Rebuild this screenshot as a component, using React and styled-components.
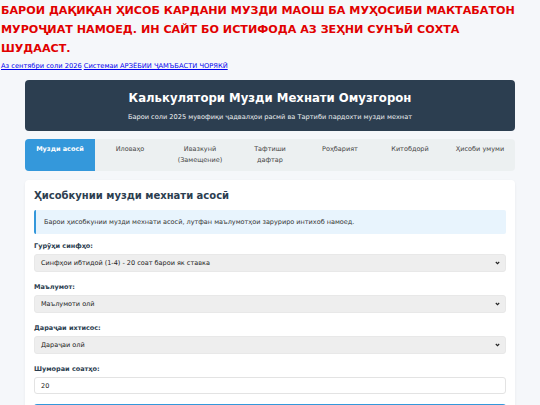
import React from 'react';
import styled, { createGlobalStyle } from 'styled-components';

const Global = createGlobalStyle`
  body {
    margin: 0;
    background: #f5f7fa;
    font-family: "DejaVu Sans", Verdana, sans-serif;
    color: #333;
  }
  * { box-sizing: border-box; }
`;

const Warning = styled.h1`
  margin: 0;
  padding: 1px 15px 0 1px;
  color: #e10000;
  font-size: 11.15px;
  line-height: 19px;
  font-weight: bold;
`;

const LinkRow = styled.div`
  padding: 4px 0 0 1px;
  font-size: 6.7px;
  line-height: 9px;
  a { color: #0000ee; margin-right: 2px; }
`;

const Container = styled.div`
  width: 490px;
  margin: 9px auto 0;
  display: flex;
  flex-direction: column;
  gap: 8px;
`;

const Header = styled.header`
  background: #2c3e50;
  color: #fff;
  border-radius: 4px;
  padding: 10px 10px 9px;
  text-align: center;
  h2 { margin: 0; font-size: 11.7px; line-height: 16px; }
  p { margin: 6px 0 0; font-size: 6.6px; line-height: 10px; color: #ecf0f1; }
`;

const Tabs = styled.nav`
  display: flex;
  background: #ecf0f1;
  border-radius: 4px;
  overflow: hidden;
`;

const Tab = styled.div`
  flex: 1;
  padding: 5px 8px;
  min-height: 32px;
  text-align: center;
  font-size: 6.5px;
  line-height: 11px;
  color: ${p => (p.$active ? '#fff' : '#444')};
  background: ${p => (p.$active ? '#3498db' : 'transparent')};
  font-weight: ${p => (p.$active ? 'bold' : 'normal')};
`;

const Card = styled.section`
  background: #fff;
  border-radius: 4px;
  margin-top: 1px;
  padding: 9px 9px 12px;
  box-shadow: 0 1px 3px rgba(0,0,0,0.06);
`;

const CardTitle = styled.h3`
  margin: 0 0 7px;
  font-size: 10px;
  line-height: 14px;
  color: #2c3e50;
`;

const Info = styled.div`
  background: #e8f4fd;
  border-left: 2px solid #3498db;
  border-radius: 2px;
  padding: 7px 8px;
  font-size: 6.5px;
  line-height: 10px;
  color: #333;
  margin-bottom: 7px;
`;

const Field = styled.div`
  margin-bottom: 10px;
`;

const Label = styled.label`
  display: block;
  font-size: 6.5px;
  font-weight: bold;
  line-height: 10px;
  color: #2c3e50;
  margin: 0 0 3px;
`;

const SelectBox = styled.div`
  height: ${p => (p.$input ? '17px' : '18px')};
  background: ${p => (p.$input ? '#fff' : '#eeeeee')};
  border: 1px solid ${p => (p.$input ? '#e3e3e3' : '#e8e8e8')};
  border-radius: 3px;
  display: flex;
  align-items: center;
  justify-content: space-between;
  padding: 0 5px 0 6px;
  font-size: 6.5px;
  color: #222;
`;

const Chevron = () => (
  <svg width="5" height="4" viewBox="0 0 5 4">
    <path d="M0.8 1l1.7 1.7 1.7-1.7" fill="none" stroke="#222" strokeWidth="1.1" />
  </svg>
);

const Button = styled.div`
  height: 20px;
  background: #3498db;
  border-radius: 3px;
`;

const tabs = [
  'Музди асосӣ',
  'Иловаҳо',
  'Ивазкунӣ (Замещение)',
  'Тафтиши дафтар',
  'Роҳбарият',
  'Китобдорӣ',
  'Ҳисоби умуми',
];

const fields = [
  { label: 'Гурӯҳи синфҳо:', value: 'Синфҳои ибтидоӣ (1-4) - 20 соат барои як ставка' },
  { label: 'Маълумот:', value: 'Маълумоти олӣ' },
  { label: 'Дараҷаи ихтисос:', value: 'Дараҷаи олӣ' },
];

export default function App() {
  return (
    <>
      <Global />
      <Warning>
        БАРОИ ДАҚИҚАН ҲИСОБ КАРДАНИ МУЗДИ МАОШ БА МУҲОСИБИ МАКТАБАТОН МУРОҶИАТ НАМОЕД. ИН САЙТ БО ИСТИФОДА АЗ ЗЕҲНИ СУНЪӢ СОХТА ШУДААСТ.
      </Warning>
      <LinkRow>
        <a href="#">Аз сентябри соли 2026</a>
        <a href="#">Системаи АРЗЁБИИ ҶАМЪБАСТИ ЧОРЯКӢ</a>
      </LinkRow>
      <Container>
        <Header>
          <h2>Калькулятори Музди Мехнати Омузгорон</h2>
          <p>Барои соли 2025 мувофиқи ҷадвалҳои расмӣ ва Тартиби пардохти музди мехнат</p>
        </Header>
        <Tabs>
          {tabs.map((t, i) => (
            <Tab key={t} $active={i === 0}>{t}</Tab>
          ))}
        </Tabs>
        <Card>
          <CardTitle>Ҳисобкунии музди мехнати асосӣ</CardTitle>
          <Info>Барои ҳисобкунии музди мехнати асосӣ, лутфан маълумотҳои заруриро интихоб намоед.</Info>
          {fields.map(f => (
            <Field key={f.label}>
              <Label>{f.label}</Label>
              <SelectBox>
                <span>{f.value}</span>
                <Chevron />
              </SelectBox>
            </Field>
          ))}
          <Field>
            <Label>Шумораи соатҳо:</Label>
            <SelectBox $input>
              <span>20</span>
            </SelectBox>
          </Field>
          <Button />
        </Card>
      </Container>
    </>
  );
}
